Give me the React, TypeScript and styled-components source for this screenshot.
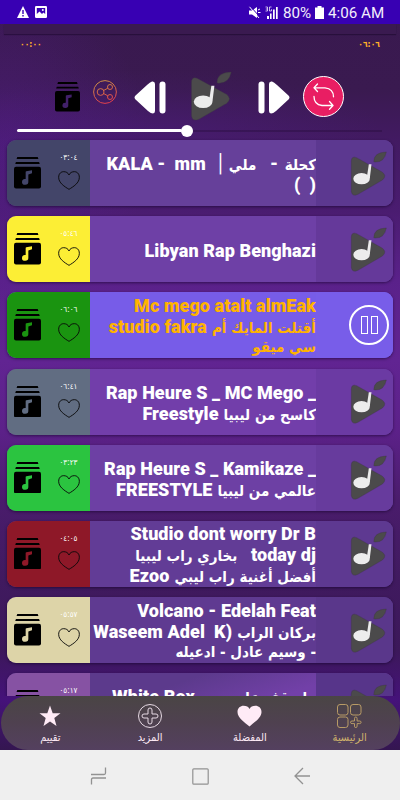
import React from 'react';
import styled, { createGlobalStyle } from 'styled-components';

const GlobalStyle = createGlobalStyle`
  *, *::before, *::after { box-sizing: border-box; }
  body { margin: 0; background: #39194d; }
  svg { display: block; flex: none; }
`;

const Screen = styled.div`
  width: 400px;
  height: 800px;
  display: flex;
  flex-direction: column;
  overflow: hidden;
  font-family: Roboto, 'DejaVu Sans', sans-serif;
  background:
    radial-gradient(ellipse 230px 60px at 150px 130px, rgba(80, 30, 135, 0.35), transparent),
    radial-gradient(ellipse 150px 170px at 0 150px, rgba(90, 30, 150, 0.45), transparent),
    linear-gradient(180deg, #39194f 0, #3a1a50 90px, #421a62 140px, #4a1c70 210px, #5a218a 280px,
      #612492 360px, #5c2189 430px, #4a1c6c 500px, #401a5f 580px, #3c185a 650px, #45127a 700px, #341650 750px);
`;

const StatusBar = styled.header`
  flex: none;
  height: 24px;
  padding: 0 17px;
  display: flex;
  align-items: center;
  justify-content: space-between;
  background: #3800b3;
`;

const StatusGroup = styled.div<{ $gap: number }>`
  display: flex;
  align-items: center;
  gap: ${(p) => p.$gap}px;
`;

const StatusText = styled.span<{ $w: number }>`
  width: ${(p) => p.$w}px;
  padding-top: 1px;
  font-size: 15.2px;
  line-height: 24px;
  color: #f3eefc;
  white-space: nowrap;
`;

const Strip = styled.div`
  flex: none;
  height: 10px;
  margin: 0 4px;
  background: #3a1a50;
  box-shadow: 0 1px 1px rgba(20, 5, 35, 0.45);
`;

const Times = styled.div`
  flex: none;
  height: 20px;
  padding: 0 20px;
  display: flex;
  justify-content: space-between;
  align-items: center;
  color: #ffb029;
  font: bold 8.5px/20px 'DejaVu Sans Condensed', 'DejaVu Sans', sans-serif;
  letter-spacing: -0.5px;
`;

const Controls = styled.div`
  flex: none;
  height: 69px;
  padding: 0 57px 0 55px;
  display: flex;
  align-items: flex-start;
`;

const Control = styled.button<{ $left?: number; $top: number }>`
  flex: none;
  display: block;
  margin: ${(p) => p.$top}px 0 0 ${(p) => p.$left ?? 0}px;
  padding: 0;
  border: 0;
  background: none;
`;

const RepeatButton = styled(Control)`
  width: 41px;
  height: 41px;
  padding: 3.5px;
  border: 1.4px solid #fff;
  border-radius: 50%;
  background: #e91e63;
`;

const Slider = styled.div`
  flex: none;
  height: 15px;
  margin: 0 18px 0 17px;
  display: flex;
  align-items: center;
`;

const Played = styled.div`
  width: 165px;
  height: 2.6px;
  border-radius: 2px;
  background: #fff;
`;

const Thumb = styled.div`
  width: 12px;
  height: 12px;
  margin-left: -1px;
  border-radius: 50%;
  background: #fff;
`;

const Remaining = styled.div`
  flex: 1;
  height: 2px;
  background: rgba(35, 12, 55, 0.35);
`;

const List = styled.main`
  flex: none;
  height: 558px;
  padding: 2px 7px 0;
  display: flex;
  flex-direction: column;
  gap: 10.2px;
  overflow: hidden;
`;

const Card = styled.article<{ $bg: string }>`
  flex: none;
  height: 66px;
  display: flex;
  border-radius: 9px;
  overflow: hidden;
  background: ${(p) => p.$bg};
  box-shadow: 0 1px 3px rgba(15, 0, 35, 0.55);
`;

const Cover = styled.div<{ $bg: string }>`
  flex: none;
  width: 83px;
  padding-left: 7px;
  display: flex;
  gap: 17px;
  background: ${(p) => p.$bg};
  & > svg { margin-top: 17px; }
`;

const Meta = styled.div`
  width: 22px;
  display: flex;
  flex-direction: column;
  align-items: center;
  padding-top: 12px;
  gap: 7.5px;
`;

const Duration = styled.time`
  width: 22px;
  padding-left: 1.5px;
  white-space: nowrap;
  color: #fff;
  font: 8px/11px 'DejaVu Sans Condensed', 'DejaVu Sans', sans-serif;
  letter-spacing: -0.4px;
`;

const Titles = styled.div<{ $active?: boolean }>`
  flex: none;
  width: 226px;
  padding-top: 2px;
  display: flex;
  flex-direction: column;
  justify-content: center;
  color: ${(p) => (p.$active ? '#ffb300' : '#fff')};
`;

const Line = styled.div`
  height: 21px;
  display: flex;
  justify-content: flex-end;
  align-items: baseline;
  white-space: pre;
`;

const Latin = styled.span<{ $w?: number }>`
  ${(p) => (p.$w ? `width: ${p.$w}px;` : '')}
  letter-spacing: 0.08px;
  font-size: 18px;
  line-height: 21px;
  font-weight: 900;
`;

const Arabic = styled.span<{ $left?: number }>`
  margin-left: ${(p) => p.$left ?? 5}px;
  direction: rtl;
  font: bold 15px/21px 'DejaVu Sans Condensed', 'DejaVu Sans', sans-serif;
  font-stretch: semi-condensed;
`;

const Art = styled.div<{ $shade: string }>`
  flex: 1;
  display: flex;
  justify-content: flex-end;
  padding: 10.5px 6px 0 0;
  background: ${(p) => p.$shade};
`;

const PauseRing = styled.div`
  width: 40px;
  height: 40px;
  margin: 2.5px -2px 0 0;
  border: 2px solid #fff;
  border-radius: 50%;
  display: flex;
  align-items: center;
  justify-content: center;
  gap: 3px;
`;

const PauseBar = styled.span`
  width: 7px;
  height: 18px;
  border: 1.5px solid #fff;
`;

const BottomNav = styled.nav`
  flex: none;
  height: 54px;
  margin: 0 0.5px;
  display: grid;
  grid-template-columns: repeat(4, 1fr);
  border-radius: 27px;
  background: linear-gradient(180deg, #4a4545, #4f4150 50%, #54405f);
`;

const NavItem = styled.a<{ $color: string }>`
  display: flex;
  flex-direction: column;
  align-items: center;
  padding-top: 8px;
  gap: 2px;
  color: ${(p) => p.$color};
  font: 11px/16px 'DejaVu Sans Condensed', 'DejaVu Sans', sans-serif;
  font-stretch: semi-condensed;
`;

const SystemNav = styled.footer`
  flex: none;
  height: 50px;
  padding: 2px 89px 0 90px;
  display: flex;
  align-items: center;
  justify-content: space-between;
  background: #efefef;
`;

const PlaylistIcon = ({ note, width = 27, height = 31.5 }: { note: string; width?: number; height?: number }) => (
  <svg width={width} height={height} viewBox="0 0 81 94" preserveAspectRatio="none">
    <path d="M10 0h61q2 3 2 6H8q0-3 2-6zM6 15h69q2 3 2 6H4q0-3 2-6z" />
    <rect y="29" width="81" height="65" rx="6" />
    <path d="M35 45q0-2 2-2.500L54 39.500v9L43 52v22a9.500 8.500 0 1 1-8-8z" fill={note} />
  </svg>
);

const Logo = ({ width = 37, height = 45 }: { width?: number; height?: number }) => (
  <svg width={width} height={height} viewBox="0 0 112 135" preserveAspectRatio="none">
    <path d="M4 31Q4 14 20 20L97 63Q113 74 98 87L24 130Q6 138 4 121Z" fill="#4b4a4b" stroke="#3c3545" />
    <path d="M72 32Q72 4 110 3Q104 34 76 33Z" fill="#4b4a4b" stroke="#3c3545" />
    <ellipse cx="35" cy="83" rx="25" ry="17" fill="#ececec" />
    <path d="M51 79L57 40h8L60 82Z" fill="#ececec" />
  </svg>
);

const HeartOutline = () => (
  <svg width="22" height="19" viewBox="0 0 66 57" fill="none" stroke="#0a0a0a" strokeWidth="2.8">
    <path d="M33 55C20 47 2 36 2 19C2 7 10 2 17 2c7 0 13 3 16 10C36 5 42 2 49 2c7 0 15 5 15 17C64 36 46 47 33 55Z" />
  </svg>
);

const ShareIcon = () => (
  <svg width="24" height="24" viewBox="0 0 24 24" fill="none" stroke="url(#shareStroke)" strokeWidth="1">
    <defs>
      <linearGradient id="shareStroke" gradientUnits="userSpaceOnUse" x1="6" y1="0" x2="14" y2="24">
        <stop stopColor="#c99445" />
        <stop offset="1" stopColor="#e23a4c" />
      </linearGradient>
    </defs>
    <circle cx="12" cy="12" r="11.4" />
    <circle cx="7.6" cy="12" r="3.4" />
    <circle cx="17" cy="7" r="2.5" />
    <circle cx="17" cy="17" r="2.5" />
    <path d="M10.8 10.4L14.8 8.2M10.8 13.6l4 2.2" />
  </svg>
);

const SkipIcon = ({ flip }: { flip?: boolean }) => (
  <svg width="32" height="33" viewBox="0 0 32 33" fill="#fff">
    <g transform={flip ? 'translate(32 0) scale(-1 1)' : undefined}>
      <rect x="0.5" y="0.5" width="6" height="32" rx="3" />
      <path d="M11 3Q11 0 14 0.5Q16 1 19 4L31 15Q32 16.500 31 18L18 30Q15 32.500 13 32.500Q11 32 11 30Z" />
    </g>
  </svg>
);

const RepeatIcon = () => (
  <svg width="31" height="31" viewBox="0 0 31 31" fill="none" stroke="#fff" strokeWidth="1.300" strokeLinecap="round" strokeLinejoin="round">
    <path d="M9.500 3L6 6.800l3.500 3.700M6 6.800h11q8.500 1 8.500 9M21.500 20.500l3.500 4-3.500 3.800M25 24.500H14q-8-1-8-9" />
  </svg>
);

interface Track {
  time: string;
  cover: string;
  bg: string;
  shade: string;
  active?: boolean;
  title: React.ReactNode;
}

const tracks: Track[] = [
  {
    time: '٠٣:٠٤', cover: '#434569', bg: '#66409a', shade: '#5c3890',
    title: (
      <>
        <Line><Latin>{'KALA -  mm'}</Latin><Latin $w={23}>{'  │'}</Latin><Arabic $left={0}>ملي</Arabic><Latin>{'   - '}</Latin><Arabic $left={2}>كحلة</Arabic></Line>
        <Line><Latin>{'(  )'}</Latin></Line>
      </>
    ),
  },
  {
    time: '٠٥:٤٦', cover: '#fcee35', bg: '#6e40a6', shade: '#65399a',
    title: <Line><Latin>Libyan Rap Benghazi</Latin></Line>,
  },
  {
    time: '٠٦:٠٦', cover: '#1a9410', bg: '#775ce8', shade: '#785de9', active: true,
    title: (
      <>
        <Line><Latin>Mc mego atalt almEak</Latin></Line>
        <Line><Latin>studio fakra</Latin><Arabic>أقتلت المايك أم</Arabic></Line>
        <Line><Arabic>سي ميقو</Arabic></Line>
      </>
    ),
  },
  {
    time: '٠٦:٤١', cover: '#616d82', bg: '#723eaa', shade: '#6b3aa3',
    title: (
      <>
        <Line><Latin>Rap Heure S _ MC Mego _</Latin></Line>
        <Line><Latin>Freestyle</Latin><Arabic>كاسح من ليبيا</Arabic></Line>
      </>
    ),
  },
  {
    time: '٠٣:٢٣', cover: '#2bc440', bg: '#6d40a4', shade: '#673b9d',
    title: (
      <>
        <Line><Latin>Rap Heure S _ Kamikaze _</Latin></Line>
        <Line><Latin>FREESTYLE</Latin><Arabic>عالمي من ليبيا</Arabic></Line>
      </>
    ),
  },
  {
    time: '٠٤:٠٥', cover: '#8e1828', bg: '#623c96', shade: '#5e3991',
    title: (
      <>
        <Line><Latin>Studio dont worry Dr B</Latin></Line>
        <Line><Arabic>بخاري راب ليبيا</Arabic><Latin>{'   today dj'}</Latin></Line>
        <Line><Latin>Ezoo</Latin><Arabic>أفضل أغنية راب ليبي</Arabic></Line>
      </>
    ),
  },
  {
    time: '٠٥:٥٧', cover: '#ddd4a8', bg: '#5f3a91', shade: '#5a378b',
    title: (
      <>
        <Line><Latin>Volcano - Edelah Feat</Latin></Line>
        <Line><Latin>{'Waseem Adel  K)'}</Latin><Arabic>بركان الراب</Arabic></Line>
        <Line><Arabic>- وسيم عادل - ادعيله</Arabic></Line>
      </>
    ),
  },
  {
    time: '٠٥:١٧', cover: '#8652a3', bg: 'linear-gradient(160deg, #5c3a8c 35%, #7240a8 60%)', shade: '#57358a',
    title: (
      <>
        <Line><Latin>White Box</Latin><Arabic $left={14}>ماتوقف علي حد</Arabic></Line>
        <Line />
      </>
    ),
  },
];

export default function App() {
  return (
    <>
      <GlobalStyle />
      <Screen>
        <StatusBar>
          <StatusGroup $gap={6}>
            <svg width="12" height="12" viewBox="0 0 12 12">
              <path d="M6 0L12 12H0Z" fill="#fff" />
              <path d="M6 4v4M6 9v1.400" stroke="#3800b3" strokeWidth="1.400" />
            </svg>
            <svg width="12" height="12" viewBox="0 0 12 12">
              <rect width="12" height="12" rx="1.200" fill="#fff" />
              <path d="M1.800 2h8.400v6L8.400 6.400 7 8 4.500 5.500 1.800 8Z" fill="#3800b3" />
              <circle cx="7.800" cy="4" r="1" fill="#fff" />
            </svg>
          </StatusGroup>
          <StatusGroup $gap={4}>
            <svg width="13" height="13" viewBox="0 0 13 13">
              <path d="M1 4.500h3L9 1v11L4 8.500H1Z" fill="#fff" />
              <path d="M2 0L12 11" stroke="#3800b3" strokeWidth="1" />
              <path d="M1.500 0.800L11 12M10 4l2-1M10 6.500h2.500" stroke="#fff" strokeWidth="1" />
            </svg>
            <svg width="14" height="13" viewBox="0 0 14 13" fill="#fff">
              <path d="M2 10h2v3H2zM5 7.500h1.600V13H5zM8 3.500h1.700V13H8zM11 1h1.700v12H11z" />
              <path d="M0.500 1h2v4h-2M0.800 3h1.700M6.500 1h-2v4h2V3.200" fill="none" stroke="#fff" strokeWidth="0.700" />
            </svg>
            <StatusText $w={28}>80%</StatusText>
            <svg width="9" height="13" viewBox="0 0 9 13" fill="#fff"><path d="M2.500 0h4v1.500H9V13H0V1.500h2.500z" /></svg>
            <StatusText $w={55}>4:06 AM</StatusText>
          </StatusGroup>
        </StatusBar>
        <Strip />
        <Times><span>٠٠:٠٠</span><span>٠٦:٠٦</span></Times>
        <Controls>
          <Control $top={28}><PlaylistIcon note="#41206a" width={25} height={29.5} /></Control>
          <Control $top={25.500} $left={13}><ShareIcon /></Control>
          <Control $top={26.500} $left={17}><SkipIcon flip /></Control>
          <Control $top={17} $left={24}><Logo width={42} height={50} /></Control>
          <Control $top={26.500} $left={26}><SkipIcon /></Control>
          <RepeatButton $top={22} $left={13}><RepeatIcon /></RepeatButton>
        </Controls>
        <Slider><Played /><Thumb /><Remaining /></Slider>
        <List>
          {tracks.map((t) => (
            <Card key={t.time} $bg={t.bg}>
              <Cover $bg={t.cover}>
                <PlaylistIcon note={t.cover} />
                <Meta><Duration>{t.time}</Duration><HeartOutline /></Meta>
              </Cover>
              <Titles $active={t.active}>{t.title}</Titles>
              <Art $shade={t.shade}>
                {t.active ? <PauseRing><PauseBar /><PauseBar /></PauseRing> : <Logo />}
              </Art>
            </Card>
          ))}
        </List>
        <BottomNav>
          <NavItem $color="#fce9f4">
            <svg width="24" height="24" viewBox="0 0 24 24" fill="#ffebf6">
              <path d="M12 1.500l2.700 7.700h7.800l-6.200 4.900 2.200 8L12 17.500l-6.500 4.600 2.200-8L1.500 9.200h7.800z" />
            </svg>
            تقييم
          </NavItem>
          <NavItem $color="#fce9f4">
            <svg width="24" height="24" viewBox="0 0 24 24" fill="none" stroke="#e6d9e3">
              <circle cx="12" cy="12" r="11.500" />
              <path d="M10 6q0-2 2-2t2 2v4h4q2 0 2 2t-2 2h-4v4q0 2-2 2t-2-2v-4H6q-2 0-2-2t2-2h4z" />
            </svg>
            المزيد
          </NavItem>
          <NavItem $color="#fce9f4">
            <svg width="25" height="24" viewBox="0 0 25 24" fill="#ffebf6">
              <path d="M12.500 22.500C8 18.500 0.500 14 0.500 8C0.500 4 3.500 1.800 6.500 1.800c3 0 5 1.200 6 3.200c1-2 3-3.200 6-3.200c3 0 6 2.200 6 6.200c0 6-7.500 10.500-12 14.500z" />
            </svg>
            المفضلة
          </NavItem>
          <NavItem $color="#d0b36c">
            <svg width="25" height="24" viewBox="0 0 25 24" fill="none" stroke="#b89b66">
              <rect x="0.500" y="0.500" width="10.500" height="10.500" rx="2.500" />
              <rect x="13.500" y="0.500" width="10.500" height="10.500" rx="2.500" />
              <rect x="0.500" y="13" width="10.500" height="10.500" rx="2.500" />
              <path d="M17.500 14.500q0-1.500 1.300-1.500t1.300 1.500v2.500h2.500q1.500 0 1.500 1.300t-1.500 1.300h-2.500v2.500q0 1.500-1.300 1.500t-1.300-1.500v-2.500h-2.500q-1.500 0-1.500-1.300t1.500-1.300h2.500z" />
            </svg>
            الرئيسية
          </NavItem>
        </BottomNav>
        <SystemNav>
          <svg width="17" height="18" viewBox="0 0 17 18" fill="none" stroke="#929292" strokeWidth="1.300">
            <path d="M1 7.500h13q1.500 0 1.500-1.500V0.500M16 11H3q-1.500 0-1.500 1.500v5" />
          </svg>
          <svg width="17" height="17" viewBox="0 0 17 17" fill="none" stroke="#929292" strokeWidth="1.200">
            <rect x="0.800" y="0.800" width="15.400" height="15.400" rx="1" />
          </svg>
          <svg width="17" height="18" viewBox="0 0 17 18" fill="none" stroke="#929292" strokeWidth="1.300">
            <path d="M16 9H1M9 1L1 9l8 8" />
          </svg>
        </SystemNav>
      </Screen>
    </>
  );
}
